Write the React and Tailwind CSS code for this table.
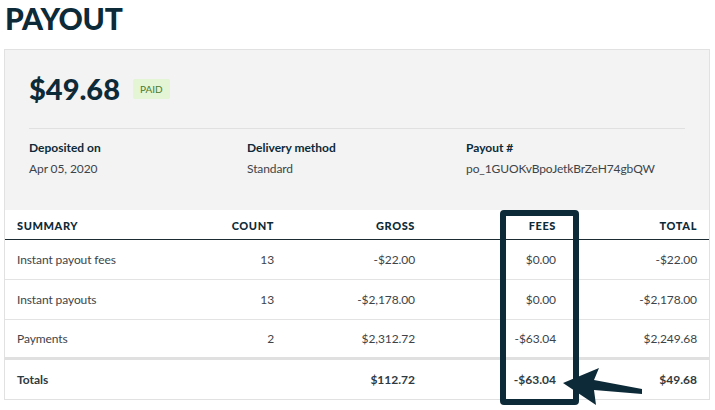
import React from 'react';

const rows = [
  { name: 'Instant payout fees', count: 13, gross: '-$22.00', fees: '$0.00', total: '-$22.00' },
  { name: 'Instant payouts', count: 13, gross: '-$2,178.00', fees: '$0.00', total: '-$2,178.00' },
  { name: 'Payments', count: 2, gross: '$2,312.72', fees: '-$63.04', total: '$2,249.68' },
];

const cols = 'grid grid-cols-[1fr_141px_141px_141px_141px]';

const App = () => {
  return (
    <div className="relative w-[715px] h-[410px] bg-white overflow-hidden font-['Lato',sans-serif] text-[#3d4449]">
      <div className="px-[4px]">
        <h1 className="h-[49px] pl-[1px] text-[30px] leading-[36px] font-black tracking-[-0.3px] text-[#0d2a38]">
          PAYOUT
        </h1>

        <div className="w-[706px] border border-[#e1e1e1]">
          {/* header block */}
          <div className="bg-[#f3f3f3] px-[24px] h-[160px]">
            <div className="flex items-center gap-[13px] pt-[24px] pb-[25px] border-b border-[#e0e0e0]">
              <span className="text-[29px] leading-[29px] font-black text-[#0d2a38]">$49.68</span>
              <span className="bg-[#e3f5d4] text-[#4d7a2e] text-[10px] leading-[10px] px-[7px] py-[5px] rounded-[2px]">
                PAID
              </span>
            </div>
            <div className="flex pt-[12px]">
              <div className="w-[218px]">
                <div className="text-[12px] font-bold text-[#0d2a38] leading-[14px]">Deposited on</div>
                <div className="text-[12px] mt-[7px] leading-[14px] tracking-[-0.1px]">Apr 05, 2020</div>
              </div>
              <div className="w-[219px]">
                <div className="text-[12px] font-bold text-[#0d2a38] leading-[14px]">Delivery method</div>
                <div className="text-[12px] mt-[7px] leading-[14px] tracking-[-0.1px]">Standard</div>
              </div>
              <div>
                <div className="text-[12px] font-bold text-[#0d2a38] leading-[14px]">Payout #</div>
                <div className="text-[12px] mt-[7px] leading-[14px] tracking-[-0.1px]">po_1GUOKvBpoJetkBrZeH74gbQW</div>
              </div>
            </div>
          </div>

          {/* table */}
          <div className="bg-white">
            <div className={`${cols} h-[30px] pt-[3px] items-center border-b-[1.5px] border-[#1d2c33] text-[11px] font-black tracking-[0.6px] text-[#0d2a38]`}>
              <div className="pl-[12px]">SUMMARY</div>
              <div className="text-right pr-[12px]">COUNT</div>
              <div className="text-right pr-[12px]">GROSS</div>
              <div className="text-right pr-[12px]">FEES</div>
              <div className="text-right pr-[12px]">TOTAL</div>
            </div>
            {rows.map((r, i) => (
              <div
                key={r.name}
                className={`${cols} h-[40px] items-center text-[12px] tracking-[-0.1px] ${i < rows.length - 1 ? 'border-b border-[#e3e3e3]' : 'border-b-[3px] border-[#e0e0e0]'}`}
              >
                <div className="pl-[12px]">{r.name}</div>
                <div className="text-right pr-[12px]">{r.count}</div>
                <div className="text-right pr-[12px]">{r.gross}</div>
                <div className="text-right pr-[12px]">{r.fees}</div>
                <div className="text-right pr-[12px]">{r.total}</div>
              </div>
            ))}
            <div className={`${cols} h-[39px] pt-[1px] items-center text-[12px] font-bold text-[#2f3a40]`}>
              <div className="pl-[12px]">Totals</div>
              <div />
              <div className="text-right pr-[12px]">$112.72</div>
              <div className="text-right pr-[12px]">-$63.04</div>
              <div className="text-right pr-[12px]">$49.68</div>
            </div>
          </div>
        </div>
      </div>

      {/* highlight box around fees column */}
      <div className="absolute left-[500px] top-[210px] w-[79px] h-[195px] border-[6px] border-[#0d2a38] rounded-[4px]" />

      {/* arrow */}
      <svg className="absolute left-0 top-0" width="715" height="410" viewBox="0 0 715 410">
        <path
          d="M563 383 L599 368 L594 380 L642 389 L642 394 L594 390 L596 405 Z"
          fill="#0d2a38"
        />
      </svg>
    </div>
  );
};

export default App;
